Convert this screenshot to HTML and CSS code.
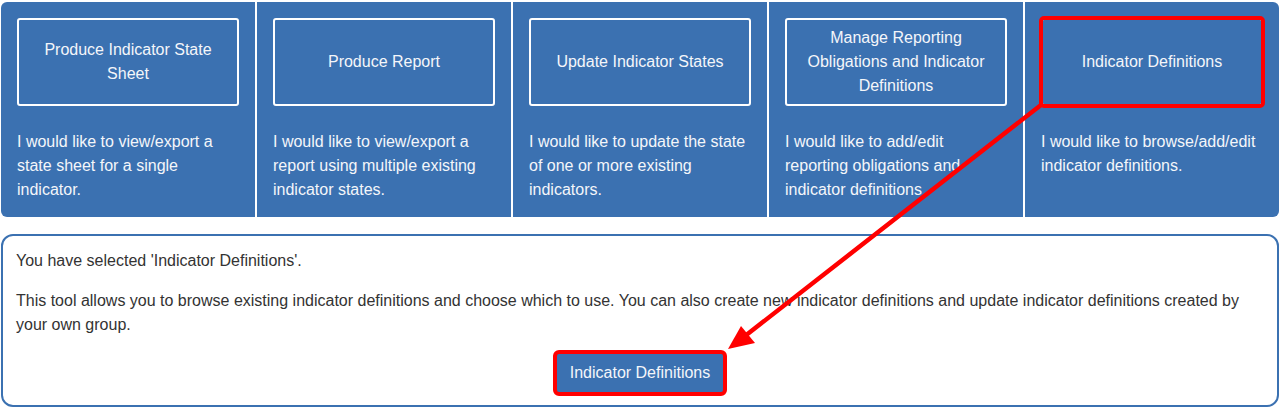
FILE: index.html
```html
<!DOCTYPE html>
<html lang="en">
<head>
    <meta charset="UTF-8">
    <meta name="viewport" content="width=device-width, initial-scale=1.0">
    <title>Tools</title>
    <link rel="stylesheet" href="styles.css">
</head>
<body>

<div class="tiles">
    <div class="tile">
        <button class="tile-btn">Produce Indicator State Sheet</button>
        <p class="tile-text">I would like to view/export a state sheet for a single indicator.</p>
    </div>
    <div class="tile">
        <button class="tile-btn">Produce Report</button>
        <p class="tile-text">I would like to view/export a report using multiple existing indicator states.</p>
    </div>
    <div class="tile">
        <button class="tile-btn">Update Indicator States</button>
        <p class="tile-text">I would like to update the state of one or more existing indicators.</p>
    </div>
    <div class="tile">
        <button class="tile-btn">Manage Reporting Obligations and Indicator Definitions</button>
        <p class="tile-text">I would like to add/edit reporting obligations and indicator definitions</p>
    </div>
    <div class="tile">
        <button class="tile-btn marked">Indicator Definitions</button>
        <p class="tile-text">I would like to browse/add/edit indicator definitions.</p>
    </div>
</div>

<div class="selected-box">
    <p>You have selected 'Indicator Definitions'.</p>
    <p>This tool allows you to browse existing indicator definitions and choose which to use. You can also create new indicator definitions and update indicator definitions created by your own group.</p>
    <div class="action">
        <button class="go-btn marked">Indicator Definitions</button>
    </div>
</div>

<!-- annotation arrow -->
<svg class="arrow" width="1279" height="408" viewBox="0 0 1279 408">
    <line x1="1041" y1="105" x2="745" y2="336" stroke="#ff0000" stroke-width="4.5" stroke-linecap="round"/>
    <polygon points="728,349 741,326 755,343" fill="#ff0000"/>
</svg>

</body>
</html>
```

FILE: styles.css
```css
body {
    margin: 2px 0 0 1px;
    font-family: "Liberation Sans", Arial, sans-serif;
    position: relative;
}

.tiles {
    display: flex;
    gap: 2px;
    width: 1278px;
    border-radius: 6px;
    overflow: hidden;
}
.tile {
    flex: 1;
    background-color: #3b71b1;
    padding: 16px 16px 15px 16px;
}
.tile-btn {
    display: flex;
    align-items: center;
    justify-content: center;
    width: 100%;
    height: 88px;
    padding: 0 20px;
    background-color: #3b71b1;
    border: 2px solid #ffffff;
    border-radius: 3px;
    color: #f4f6fa;
    font-family: inherit;
    font-size: 16px;
    line-height: 24px;
    text-align: center;
}
.tile-text {
    margin: 24px 0 0 0;
    color: #f4f6fa;
    font-size: 16px;
    line-height: 24px;
}

.selected-box {
    margin-top: 17px;
    width: 1278px;
    box-sizing: border-box;
    border: 2px solid #3b71b1;
    border-radius: 12px;
    padding: 13px 13px 11px 13px;
    color: #333333;
    font-size: 16px;
    line-height: 24px;
}
.selected-box p {
    margin: 0 0 16px 0;
}
.selected-box p + p {
    margin-bottom: 15px;
}
.action {
    display: flex;
    justify-content: center;
}
.go-btn {
    width: 170px;
    height: 42px;
    background-color: #3b71b1;
    border: none;
    border-radius: 4px;
    color: #f4f6fa;
    font-family: inherit;
    font-size: 16px;
}

/* red highlight annotations */
.marked {
    outline: 4px solid #ff0000;
    outline-offset: -2px;
}
.arrow {
    position: absolute;
    left: -1px;
    top: -2px;
    pointer-events: none;
}
```
